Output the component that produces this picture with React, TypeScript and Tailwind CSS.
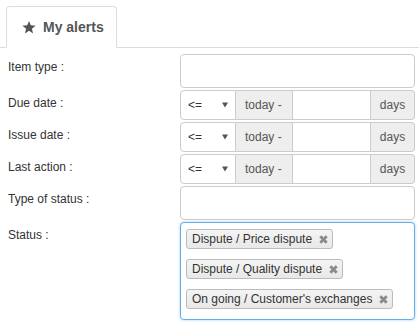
import React from "react";

function Star() {
  return (
    <svg width="14" height="14" viewBox="0 0 24 24" className="shrink-0">
      <path
        d="M12 1.5l3.1 7.6 8.2.6-6.3 5.3 2 8-7-4.4-7 4.4 2-8L.7 9.7l8.2-.6z"
        fill="#555"
      />
    </svg>
  );
}

function XIcon() {
  return (
    <svg width="9" height="9" viewBox="0 0 9 9" className="shrink-0">
      <path d="M1.3 1.3L7.7 7.7M7.7 1.3L1.3 7.7" stroke="#8a8a8a" strokeWidth="2.8" strokeLinecap="butt" />
    </svg>
  );
}

function Caret() {
  return (
    <svg width="6" height="6" viewBox="0 0 6 6">
      <path d="M0 0.5h6L3 5.5z" fill="#555" />
    </svg>
  );
}

function Label({ children }: { children: React.ReactNode }) {
  return <div className="pt-[6px] text-[12px] leading-[14px] text-[#333]">{children}</div>;
}

function DateRow() {
  return (
    <div className="flex h-[30px] text-[12px] text-[#555]">
      <div className="flex w-[56px] items-center justify-between rounded-l-[4px] border border-[#ccc] bg-white pl-[7px] pr-[7px] text-[#333]">
        <span>&lt;=</span>
        <Caret />
      </div>
      <div className="flex w-[56px] items-center border-y border-[#ccc] bg-[#eee] pl-[9px]">today -</div>
      <div className="w-[79px] border border-[#ccc] bg-white"></div>
      <div className="flex flex-1 items-center justify-center rounded-r-[4px] border-y border-r border-[#ccc] bg-[#eee]">
        days
      </div>
    </div>
  );
}

function Tag({ text }: { text: string }) {
  return (
    <div className="flex h-[20px] items-center self-start rounded-[3px] border border-[#bbb] bg-gradient-to-b from-[#f4f4f4] to-[#e8e8e8] pl-[5px] pr-[4px] text-[12px] text-[#333]">
      <span className="mr-[7px]">{text}</span>
      <XIcon />
    </div>
  );
}

export default function App() {
  return (
    <div
      className="h-[322px] w-[419px] overflow-hidden bg-white"
      style={{ fontFamily: '"Liberation Sans", Arial, sans-serif' }}
    >
      <div className="flex h-[48px] items-end border-b border-[#ddd] pl-[6px]">
        <div className="-mb-px flex h-[42px] w-[111px] items-center gap-[7px] rounded-t-[4px] border border-[#ddd] border-b-white bg-white pl-[15px]">
          <Star />
          <span className="text-[14px] font-bold text-[#555]">My alerts</span>
        </div>
      </div>
      <div className="grid grid-cols-[172px_235px] gap-y-[2px] pl-[8px] pr-[4px] pt-[6px]">
        <Label>Item type :</Label>
        <div className="h-[34px] rounded-[4px] border border-[#ccc] bg-white"></div>

        <Label>Due date :</Label>
        <DateRow />

        <Label>Issue date :</Label>
        <DateRow />

        <Label>Last action :</Label>
        <DateRow />

        <Label>Type of status :</Label>
        <div className="h-[34px] rounded-[4px] border border-[#ccc] bg-white"></div>

        <Label>Status :</Label>
        <div className="flex h-[98px] flex-col gap-[10px] rounded-[4px] border border-[#66afe9] bg-white pl-[5px] pt-[6px] shadow-[0_0_3px_rgba(102,175,233,0.6)]">
          <Tag text="Dispute / Price dispute" />
          <Tag text="Dispute / Quality dispute" />
          <Tag text="On going / Customer's exchanges" />
        </div>
      </div>
    </div>
  );
}
